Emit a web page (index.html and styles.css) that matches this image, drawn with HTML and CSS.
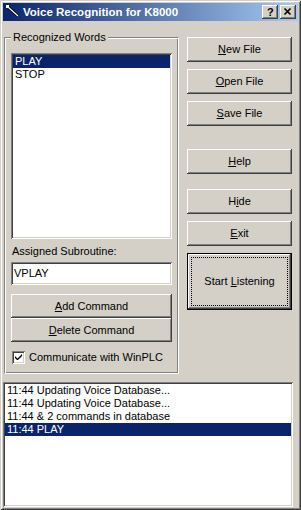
FILE: index.html
```html
<!DOCTYPE html>
<html>
<head>
<meta charset="utf-8">
<link rel="stylesheet" href="styles.css">
</head>
<body>
<div class="window">
  <div class="titlebar">
    <svg class="app-icon" width="16" height="16" viewBox="0 0 16 16">
      <line x1="3" y1="3" x2="13" y2="12" stroke="#000" stroke-width="3"/>
      <line x1="3" y1="3" x2="13" y2="12" stroke="#fff" stroke-width="1.2"/>
      <rect x="1" y="1" width="3" height="3" fill="#fff"/>
    </svg>
    <span class="title">Voice Recognition for K8000</span>
    <div class="caption-buttons">
      <div class="cap-btn">
        <svg width="16" height="14" viewBox="0 0 16 14"><text x="5" y="11" font-family="Liberation Sans, sans-serif" font-weight="bold" font-size="11" fill="#000">?</text></svg>
      </div>
      <div class="cap-btn close">
        <svg width="16" height="14" viewBox="0 0 16 14"><path d="M4.5 3.5 L10.5 9.5 M10.5 3.5 L4.5 9.5" stroke="#000" stroke-width="1.6"/></svg>
      </div>
    </div>
  </div>

  <div class="main">
    <div class="group">
      <span class="group-label">Recognized Words</span>
      <div class="listbox words">
        <div class="item selected">PLAY</div>
        <div class="item">STOP</div>
      </div>
      <div class="field-label">Assigned Subroutine:</div>
      <div class="edit">VPLAY</div>
      <div class="btn wide first"><span><u>A</u>dd Command</span></div>
      <div class="btn wide"><span><u>D</u>elete Command</span></div>
      <div class="check-row">
        <div class="checkbox">
          <svg width="9" height="9" viewBox="0 0 9 9"><path d="M1 3v2l2 2h1l4-4V1L3.5 5.5z" fill="#000"/></svg>
        </div>
        <span>Communicate with WinPLC</span>
      </div>
    </div>

    <div class="buttons">
      <div class="btn b-new"><span><u>N</u>ew File</span></div>
      <div class="btn b-gap7"><span><u>O</u>pen File</span></div>
      <div class="btn b-gap7"><span><u>S</u>ave File</span></div>
      <div class="btn b-help"><span><u>H</u>elp</span></div>
      <div class="btn b-hide"><span>H<u>i</u>de</span></div>
      <div class="btn b-gap7"><span><u>E</u>xit</span></div>
      <div class="btn default b-gap7"><div class="focus"><span>Start <u>L</u>istening</span></div></div>
    </div>
  </div>

  <div class="listbox log">
    <div class="item">11:44 Updating Voice Database...</div>
    <div class="item">11:44 Updating Voice Database...</div>
    <div class="item">11:44 &amp; 2 commands in database</div>
    <div class="item selected">11:44 PLAY</div>
  </div>
</div>
</body>
</html>
```

FILE: styles.css
```css
* { box-sizing: border-box; }

html, body {
  margin: 0;
  padding: 0;
  background: #D4D0C8;
}

body {
  font-family: "Liberation Sans", Arial, sans-serif;
  font-size: 11px;
  line-height: 13px;
  color: #000;
}

.window {
  width: 301px;
  height: 510px;
  padding: 3px;
  background: #D4D0C8;
  box-shadow: inset 1px 1px 0 #D4D0C8, inset -1px -1px 0 #404040,
              inset 2px 2px 0 #FFFFFF, inset -2px -2px 0 #808080;
  display: flex;
  flex-direction: column;
}

.titlebar {
  height: 18px;
  background: linear-gradient(to right, #0A246A, #A6CAF0);
  display: flex;
  align-items: center;
  padding-left: 2px;
  flex-shrink: 0;
}

.app-icon { flex-shrink: 0; }

.title {
  margin-left: 2px;
  color: #fff;
  font-weight: bold;
  font-size: 11.5px;
  white-space: nowrap;
}

.caption-buttons {
  margin-left: auto;
  display: flex;
  gap: 2px;
  margin-right: 2px;
}

.cap-btn {
  width: 16px;
  height: 14px;
  background: #D4D0C8;
  box-shadow: inset -1px -1px 0 #404040, inset 1px 1px 0 #FFFFFF,
              inset -2px -2px 0 #808080, inset 2px 2px 0 #D4D0C8;
}
.cap-btn svg { display: block; }

.main {
  display: flex;
  align-items: flex-start;
}

.group {
  position: relative;
  margin-left: 1px;
  margin-top: 16px;
  width: 175px;
  height: 337px;
  border: 1px solid #808080;
  border-right-color: #FFFFFF;
  border-bottom-color: #FFFFFF;
  box-shadow: inset 1px 1px 0 #FFFFFF, inset -1px -1px 0 #808080;
  padding: 15px 0 0 6px;
  display: flex;
  flex-direction: column;
}

.group-label {
  position: absolute;
  top: -7px;
  left: 6px;
  padding: 0 2px;
  background: #D4D0C8;
  line-height: 13px;
}

.listbox {
  background: #fff;
  box-shadow: inset 1px 1px 0 #808080, inset -1px -1px 0 #FFFFFF,
              inset 2px 2px 0 #404040, inset -2px -2px 0 #D4D0C8;
  padding: 2px;
}

.words {
  width: 161px;
  height: 186px;
}

.item {
  height: 13px;
  line-height: 13px;
  padding-left: 2px;
  white-space: nowrap;
}

.item.selected {
  background: #0A246A;
  color: #fff;
}

.field-label {
  margin-top: 6px;
  padding-left: 1px;
}

.edit {
  margin-top: 4px;
  width: 161px;
  height: 23px;
  background: #fff;
  box-shadow: inset 1px 1px 0 #808080, inset -1px -1px 0 #FFFFFF,
              inset 2px 2px 0 #404040, inset -2px -2px 0 #D4D0C8;
  padding: 5px 0 0 3px;
}

.btn {
  background: #D4D0C8;
  box-shadow: inset -1px -1px 0 #404040, inset 1px 1px 0 #FFFFFF,
              inset -2px -2px 0 #808080, inset 2px 2px 0 #D4D0C8;
  display: flex;
  align-items: center;
  justify-content: center;
  height: 25px;
  width: 105px;
  flex-shrink: 0;
}

.btn.wide {
  width: 161px;
  height: 24px;
}
.btn.wide.first { margin-top: 9px; }

.check-row {
  margin-top: 9px;
  display: flex;
  align-items: center;
  height: 13px;
  padding-left: 1px;
}

.checkbox {
  width: 13px;
  height: 13px;
  background: #fff;
  box-shadow: inset 1px 1px 0 #808080, inset -1px -1px 0 #FFFFFF,
              inset 2px 2px 0 #404040, inset -2px -2px 0 #D4D0C8;
  padding: 2px;
  margin-right: 4px;
}
.checkbox svg { display: block; }

.buttons {
  margin-left: 8px;
  margin-top: 16px;
  display: flex;
  flex-direction: column;
}

.b-gap7 { margin-top: 7px; }
.b-help { margin-top: 23px; }
.b-hide { margin-top: 15px; }

.btn.default {
  height: 57px;
  border: 1px solid #000;
  padding: 3px;
  box-shadow: inset -1px -1px 0 #404040, inset 1px 1px 0 #FFFFFF,
              inset -2px -2px 0 #808080, inset 2px 2px 0 #D4D0C8;
  align-items: stretch;
  justify-content: stretch;
}

.focus {
  flex: 1;
  border: 1px dotted #000;
  display: flex;
  align-items: center;
  justify-content: center;
}

.log {
  margin-top: 8px;
  width: 290px;
  height: 125px;
}

u { text-decoration: underline; text-underline-offset: 1px; }
```
